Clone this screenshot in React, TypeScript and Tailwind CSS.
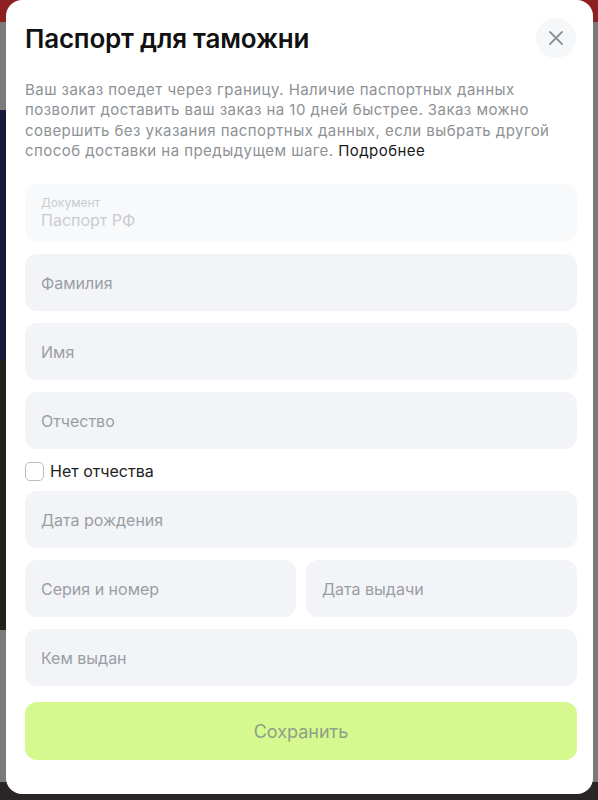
import React from "react";

function Field({ label, className = "" }: { label: string; className?: string }) {
  return (
    <div className={`h-[57px] rounded-[12px] bg-[#f2f4f7] flex items-center px-4 text-[16px] text-[#9a9ea4] ${className}`}>
      {label}
    </div>
  );
}

export default function App() {
  return (
    <div className="relative w-[598px] h-[800px] overflow-hidden bg-[#7a7a7a]" style={{ fontFamily: "Inter, 'Noto Sans', sans-serif" }}>
      {/* backdrop page */}
      <div className="absolute left-0 top-0 w-[598px] h-[22px] bg-[#8e1f22]" />
      <div className="absolute left-0 top-[110px] w-[20px] h-[250px] bg-[#17193a]" />
      <div className="absolute left-0 top-[360px] w-[20px] h-[270px] bg-[#1f2418]" />
      <div className="absolute left-0 top-[782px] w-[598px] h-[18px] bg-[#2a2526]" />

      {/* modal */}
      <div className="absolute left-[6px] top-0 w-[587px] h-[794px] bg-white rounded-[16px] pl-[19px] pr-[16px] pt-[18px]">
        <div className="flex items-center justify-between h-[40px]">
          <h1 className="text-[26px] leading-[34px] font-semibold text-[#111] tracking-[-0.2px] mt-[2px]">Паспорт для таможни</h1>
          <div className="w-[40px] h-[40px] rounded-full bg-[#f6f7f9] flex items-center justify-center mr-[1px]">
            <svg width="16" height="16" viewBox="0 0 16 16" fill="none" stroke="#8f9296" strokeWidth="1.8" strokeLinecap="round">
              <path d="M2 2L14 14M14 2L2 14" />
            </svg>
          </div>
        </div>

        <p className="mt-[22px] text-[15px] leading-[20.3px] tracking-[0.45px] text-[#8e9195] whitespace-nowrap">
          Ваш заказ поедет через границу. Наличие паспортных данных
          <br />
          позволит доставить ваш заказ на 10 дней быстрее. Заказ можно
          <br />
          совершить без указания паспортных данных, если выбрать другой
          <br />
          способ доставки на предыдущем шаге. <span className="text-[#1a1a1a]">Подробнее</span>
        </p>

        <div className="mt-[23px] flex flex-col gap-[12px]">
          <div className="h-[58px] rounded-[12px] bg-[#f8f9fa] flex flex-col justify-center px-4">
            <div className="text-[12px] leading-[14px] text-[#c9ccd0]">Документ</div>
            <div className="text-[16px] leading-[20px] text-[#c9ccd0]">Паспорт РФ</div>
          </div>
          <Field label="Фамилия" />
          <Field label="Имя" />
          <Field label="Отчество" />
        </div>

        <label className="flex items-center gap-[6px] mt-[12px] h-[20px]">
          <span className="w-[19px] h-[19px] rounded-[5px] border border-[#b8bbbf] bg-white" />
          <span className="text-[16px] text-[#222]">Нет отчества</span>
        </label>

        <div className="mt-[10px] flex flex-col gap-[12px]">
          <Field label="Дата рождения" />
          <div className="grid grid-cols-2 gap-[10px]">
            <Field label="Серия и номер" />
            <Field label="Дата выдачи" />
          </div>
          <Field label="Кем выдан" />
        </div>

        <div className="mt-[16px] h-[58px] rounded-[12px] bg-[#d5f98f] flex items-center justify-center text-[18px] text-[#8fa088]">
          Сохранить
        </div>
      </div>
    </div>
  );
}
